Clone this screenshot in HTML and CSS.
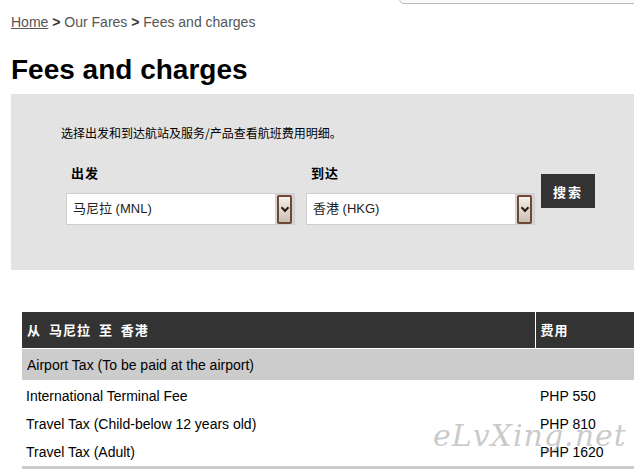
FILE: index.html
```html
<!DOCTYPE html>
<html lang="zh-CN">
<head>
    <meta charset="UTF-8">
    <meta name="viewport" content="width=device-width, initial-scale=1.0">
    <title>Fees and charges</title>
    <link rel="stylesheet" href="styles.css">
</head>
<body>
    <div class="top-tab"></div>

    <div class="page">
        <p class="breadcrumb"><a href="#home">Home</a> <b>&gt;</b> Our Fares <b>&gt;</b> Fees and charges</p>

        <h1>Fees and charges</h1>

        <!-- Search panel -->
        <section class="search-panel">
            <p class="hint">选择出发和到达航站及服务/产品查看航班费用明细。</p>
            <div class="fields">
                <div class="field">
                    <label>出发</label>
                    <div class="select-box">
                        <span class="select-value">马尼拉 (MNL)</span>
                        <span class="select-arrow"><span class="arrow-btn"></span></span>
                    </div>
                </div>
                <div class="field">
                    <label>到达</label>
                    <div class="select-box">
                        <span class="select-value">香港 (HKG)</span>
                        <span class="select-arrow"><span class="arrow-btn"></span></span>
                    </div>
                </div>
                <button class="search-btn">搜索</button>
            </div>
        </section>

        <!-- Fees table -->
        <div class="fees">
            <table class="fees-table">
                <thead>
                    <tr>
                        <th class="col-name">从 马尼拉 至 香港</th>
                        <th class="col-fee">费用</th>
                    </tr>
                </thead>
                <tbody>
                    <tr class="group-row">
                        <td colspan="2">Airport Tax (To be paid at the airport)</td>
                    </tr>
                    <tr>
                        <td>International Terminal Fee</td>
                        <td>PHP 550</td>
                    </tr>
                    <tr>
                        <td>Travel Tax (Child-below 12 years old)</td>
                        <td>PHP 810</td>
                    </tr>
                    <tr>
                        <td>Travel Tax (Adult)</td>
                        <td>PHP 1620</td>
                    </tr>
                </tbody>
            </table>
            <span class="watermark">eLvXing.net</span>
        </div>
    </div>
</body>
</html>
```

FILE: styles.css
```css
/* Global Styles */
* {
    margin: 0;
    padding: 0;
    box-sizing: border-box;
}

html, body {
    overflow: hidden;
}

body {
    background-color: #fff;
    font-family: "Liberation Sans", Arial, "Noto Sans CJK SC", sans-serif;
    color: #000;
}

.top-tab {
    position: absolute;
    top: -10px;
    left: 399px;
    width: 260px;
    height: 14px;
    background-color: #fafafa;
    border: 1px solid #b8b8b8;
    border-radius: 5px;
}

.page {
    padding-left: 11px;
}

/* Breadcrumb */
.breadcrumb {
    padding-top: 14px;
    font-size: 14px;
    line-height: 16px;
    color: #555;
}

.breadcrumb a {
    color: #555;
}

.breadcrumb b {
    color: #333;
}

h1 {
    margin-top: 24px;
    margin-bottom: 8px;
    font-size: 28px;
    line-height: 32px;
    font-weight: bold;
}

/* Search panel */
.search-panel {
    background-color: #e3e3e3;
    height: 176px;
    padding: 31px 0 0 50px;
    font-family: "Noto Sans CJK SC", sans-serif;
}

.hint {
    font-size: 12px;
    line-height: 16px;
}

.fields {
    display: flex;
    margin-top: 24px;
    padding-left: 5px;
}

.field {
    display: flex;
    flex-direction: column;
    margin-right: 11px;
}

.field label {
    padding-left: 5px;
    font-size: 13px;
    font-weight: bold;
    line-height: 16px;
    letter-spacing: 1px;
    margin-bottom: 12px;
}

.select-box {
    display: flex;
    width: 229px;
    height: 32px;
    background-color: #fff;
    border: 1px solid #cfcfcf;
}

.select-value {
    flex: 1;
    padding-left: 6px;
    font-family: "Liberation Sans", "Noto Sans CJK SC", sans-serif;
    font-size: 13px;
    line-height: 30px;
    color: #222;
}

.select-arrow {
    display: flex;
    align-items: center;
    justify-content: center;
    width: 19px;
    background-color: #d9d4cf;
}

.arrow-btn {
    position: relative;
    width: 15px;
    height: 29px;
    border: 2px solid #6e4836;
    border-radius: 2px;
    background: linear-gradient(#f4f0ec, #cbbfb3);
}

.arrow-btn::after {
    content: "";
    position: absolute;
    left: 3px;
    top: 8px;
    width: 4px;
    height: 4px;
    border-right: 2px solid #2b1a10;
    border-bottom: 2px solid #2b1a10;
    transform: rotate(45deg);
}

.search-btn {
    align-self: flex-start;
    margin-top: 9px;
    margin-left: -5px;
    width: 54px;
    height: 34px;
    background-color: #333;
    color: #fff;
    border: none;
    font-family: "Noto Sans CJK SC", sans-serif;
    font-size: 13px;
    font-weight: bold;
    letter-spacing: 2px;
}

/* Fees table */
.fees {
    position: relative;
    margin-top: 42px;
    margin-left: 11px;
}

.fees-table {
    width: 100%;
    border-collapse: collapse;
    font-size: 14px;
}

.fees-table th {
    background-color: #333;
    color: #fff;
    height: 36px;
    text-align: left;
    font-family: "Noto Sans CJK SC", sans-serif;
    font-size: 13px;
    font-weight: bold;
    letter-spacing: 1px;
    border-bottom: 1px solid #fff;
}

.fees-table .col-name {
    width: 513px;
    padding-left: 5px;
    border-right: 1px solid #fff;
    word-spacing: 4px;
}

.fees-table .col-fee {
    padding-left: 5px;
}

.fees-table td {
    height: 29px;
    padding-left: 4px;
    vertical-align: middle;
}

.fees-table td + td {
    padding-left: 5px;
}

.fees-table .group-row td {
    background-color: #ccc;
    height: 32px;
    padding-left: 5px;
    padding-top: 2px;
}

.fees-table tbody tr:nth-child(2) td {
    padding-top: 2px;
}

.fees-table tbody tr:last-child td {
    border-bottom: 3px solid #ccc;
}

.watermark {
    position: absolute;
    left: 411px;
    top: 106px;
    font-family: "DejaVu Serif", serif;
    font-style: italic;
    font-size: 30px;
    color: rgba(150, 150, 150, 0.5);
    letter-spacing: 1px;
}
```
